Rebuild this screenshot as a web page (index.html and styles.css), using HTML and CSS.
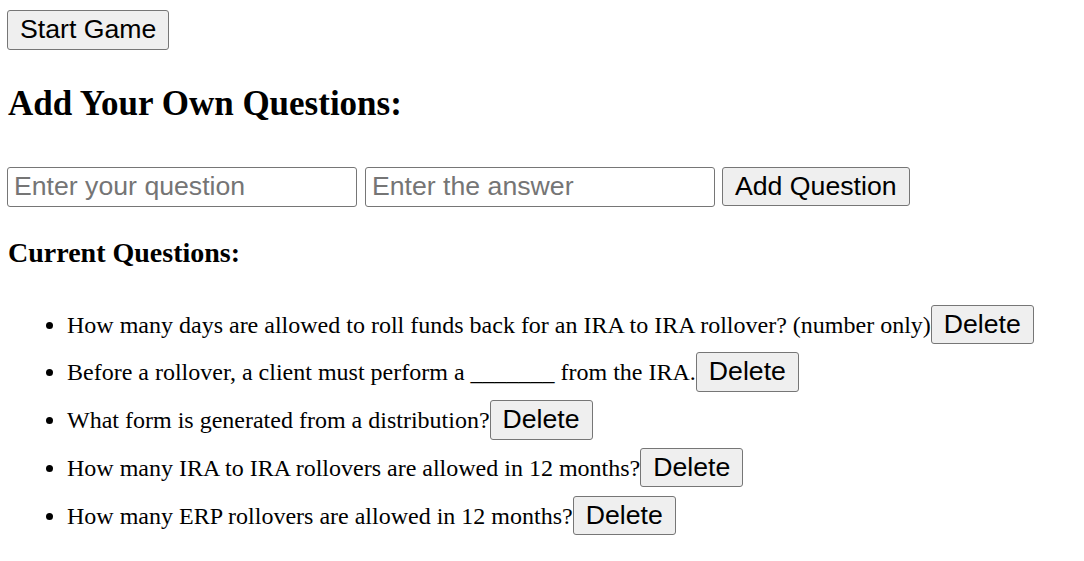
FILE: index.html
```html
<!DOCTYPE html>
<html>
<head>
<meta charset="utf-8">
<link rel="stylesheet" href="styles.css">
</head>
<body>
<div class="top"><button class="btn">Start Game</button></div>
<h2 class="title">Add Your Own Questions:</h2>
<div class="form">
  <input class="field" type="text" placeholder="Enter your question">
  <input class="field" type="text" placeholder="Enter the answer">
  <button class="btn">Add Question</button>
</div>
<h3 class="subtitle">Current Questions:</h3>
<ul class="list">
  <li>How many days are allowed to roll funds back for an IRA to IRA rollover? (number only)<button class="btn">Delete</button></li>
  <li>Before a rollover, a client must perform a _______ from the IRA.<button class="btn">Delete</button></li>
  <li>What form is generated from a distribution?<button class="btn">Delete</button></li>
  <li>How many IRA to IRA rollovers are allowed in 12 months?<button class="btn">Delete</button></li>
  <li>How many ERP rollovers are allowed in 12 months?<button class="btn">Delete</button></li>
</ul>
</body>
</html>
```
FILE: styles.css
```css
body {
  margin: 8px 8px 8px 7px;
  font-family: "Liberation Serif", "Times New Roman", serif;
  font-size: 24px;
  color: #000;
  background: #fff;
}
.top { padding-top: 2px; line-height: 0; }
.btn {
  font-family: "Liberation Sans", Arial, sans-serif;
  font-size: 26.67px;
  line-height: 29.5px;
  padding: 4px 12px;
  border: 1px solid #767676;
  border-radius: 3px;
  background: #efefef;
  color: #000;
  margin: 0;
}
.title {
  font-size: 35px;
  line-height: 40px;
  margin: 34px 0 43px 1px;
}
.form { display: flex; gap: 8px; align-items: flex-start; }
.form .btn { margin-left: -1px; }
.field {
  width: 350px;
  height: 40px;
  box-sizing: border-box;
  font-family: "Liberation Sans", Arial, sans-serif;
  font-size: 26.67px;
  padding: 0 6px;
  border: 1px solid #767676;
  border-radius: 3px;
  margin: 0;
  color: #000;
}
.field::placeholder { color: #757575; }
.subtitle {
  font-size: 28px;
  line-height: 32px;
  margin: 30px 0 36px 1px;
}
.list { padding-left: 60px; margin: 0; }
.list li { margin-bottom: 8.25px; }
```
